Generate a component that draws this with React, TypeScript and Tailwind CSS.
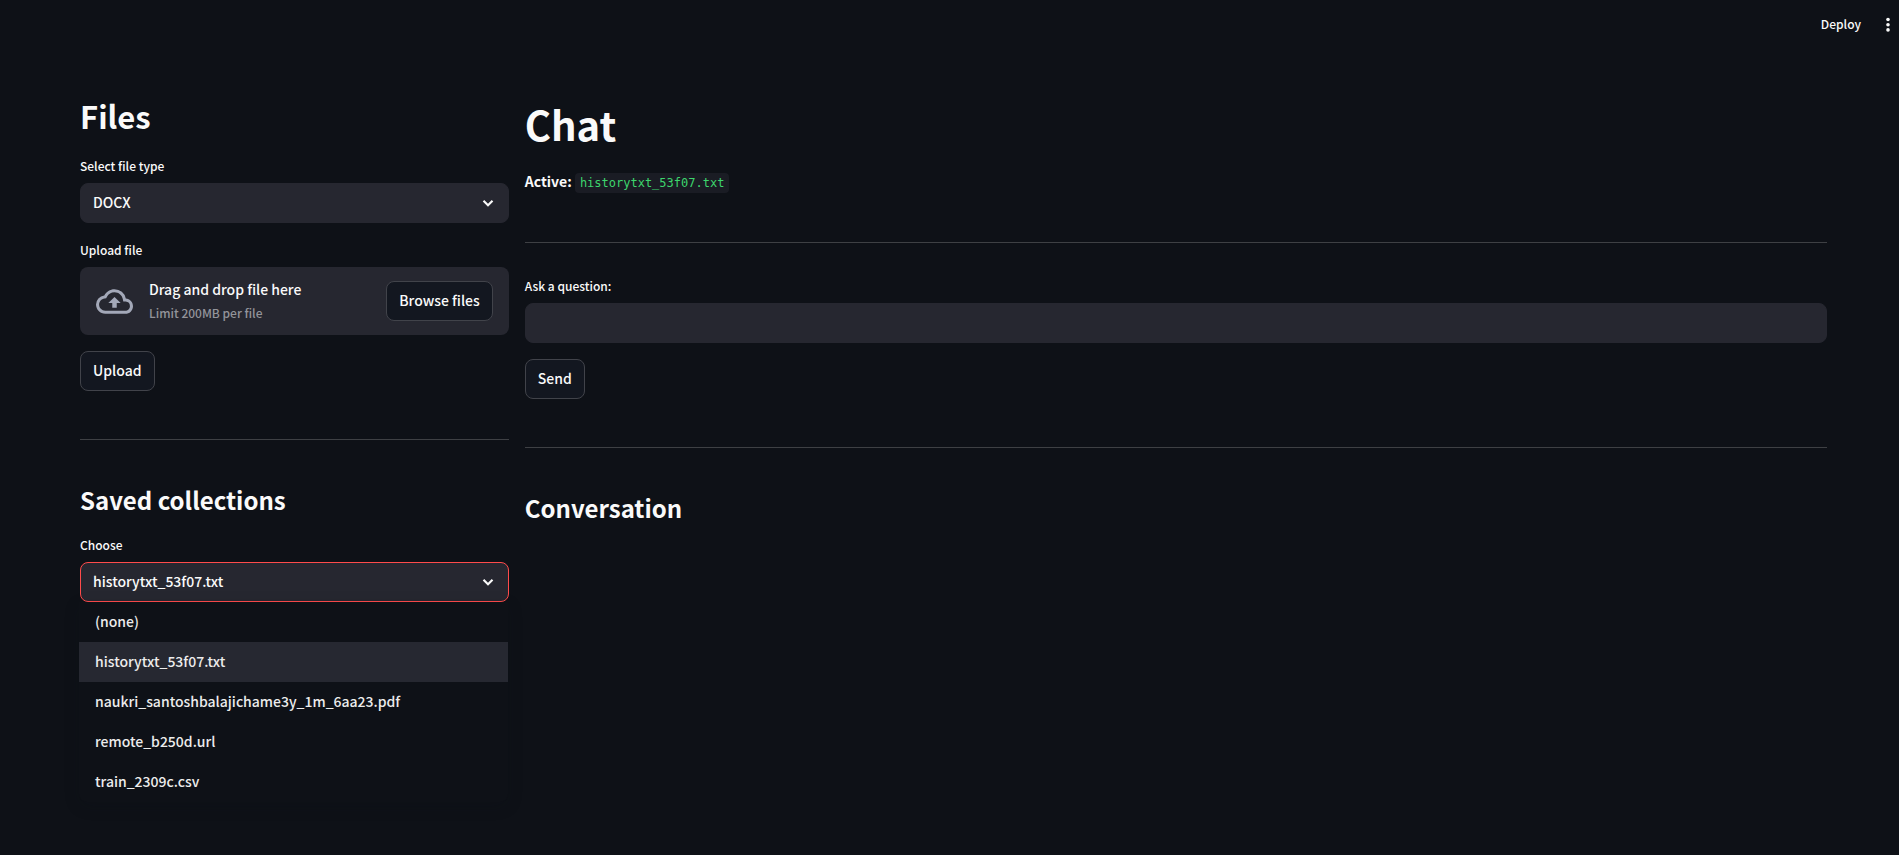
import { useRef, useState, type ReactNode, type SelectHTMLAttributes } from "react";
import { MdOutlineCloudUpload } from "react-icons/md";

const FILE_TYPES = ["DOCX", "PDF", "TXT", "CSV", "URL"];

const COLLECTIONS = [
  "(none)",
  "historytxt_53f07.txt",
  "naukri_santoshbalajichame3y_1m_6aa23.pdf",
  "remote_b250d.url",
  "train_2309c.csv",
];

function Chevron() {
  return (
    <svg
      viewBox="0 0 8 8"
      aria-hidden="true"
      className="pointer-events-none absolute top-3.5 right-[15px] size-3 fill-current"
    >
      <path d="M1.5 2L.5 3 4 6.5 7.5 3l-1-1L4 4.5 1.5 2z" />
    </svg>
  );
}

function Label({ htmlFor, children }: { htmlFor: string; children: ReactNode }) {
  return (
    <label htmlFor={htmlFor} className="block pb-1.5 text-xs leading-[22px] font-medium">
      {children}
    </label>
  );
}

type SelectBoxProps = SelectHTMLAttributes<HTMLSelectElement> & { options: string[]; open?: boolean };

function SelectBox({ options, open = false, ...rest }: SelectBoxProps) {
  return (
    <div className="relative">
      <select
        {...rest}
        className={
          "block h-10 w-full appearance-none rounded-lg border bg-[#262730] pr-10 pb-0.5 pl-3 text-sm font-medium outline-none " +
          (open ? "border-[#ff4b4b]" : "border-[#262730] focus:border-[#ff4b4b]")
        }
      >
        {options.map((option) => (
          <option key={option}>{option}</option>
        ))}
      </select>
      <Chevron />
    </div>
  );
}

function Button({ children, onClick }: { children: ReactNode; onClick?: () => void }) {
  return (
    <button
      type="button"
      onClick={onClick}
      className="h-10 shrink-0 rounded-lg border border-[#41434a] bg-[#131720] px-3 pb-0.5 text-sm font-medium hover:border-[#ff4b4b] hover:text-[#ff4b4b]"
    >
      {children}
    </button>
  );
}

function Divider() {
  return <hr className="my-8 border-t border-[#3e4044]" />;
}

function Subheading({ children }: { children: ReactNode }) {
  return <h3 className="-mt-1 pb-0.5 text-2xl leading-8 font-bold">{children}</h3>;
}

function FilesPanel() {
  const fileInput = useRef<HTMLInputElement>(null);
  const [fileType, setFileType] = useState("DOCX");
  const [collection, setCollection] = useState("historytxt_53f07.txt");

  return (
    <section className="flex min-w-0 grow basis-[calc(25%-16px)] flex-col gap-4">
      <h2 className="pb-[3px] text-[31px] leading-10 font-bold">Files</h2>

      <div>
        <Label htmlFor="file-type">Select file type</Label>
        <SelectBox
          id="file-type"
          options={FILE_TYPES}
          value={fileType}
          onChange={(event) => setFileType(event.target.value)}
        />
      </div>

      <div>
        <Label htmlFor="upload-file">Upload file</Label>
        <div className="flex items-center gap-4 rounded-lg bg-[#262730] px-4 py-3">
          <MdOutlineCloudUpload className="size-[37px] shrink-0 text-[#a3a8b8]" aria-hidden="true" />
          <div className="min-w-0 grow">
            <div className="pb-1 text-sm leading-5 font-medium">Drag and drop file here</div>
            <div className="text-xs leading-5 font-medium text-[#93949a]">Limit 200MB per file</div>
          </div>
          <input ref={fileInput} id="upload-file" type="file" className="hidden" />
          <Button onClick={() => fileInput.current?.click()}>Browse files</Button>
        </div>
      </div>

      <div>
        <Button>Upload</Button>
      </div>

      <Divider />

      <Subheading>Saved collections</Subheading>

      <div className="relative">
        <Label htmlFor="collection">Choose</Label>
        <SelectBox
          id="collection"
          open
          options={COLLECTIONS}
          value={collection}
          onChange={(event) => setCollection(event.target.value)}
        />
        <ul
          role="listbox"
          aria-label="Choose"
          className="absolute top-full right-px -left-px rounded-b-lg bg-[#0e1117] text-sm font-medium text-[#ececec] shadow-[0_4px_16px_rgba(14,17,23,0.16)]"
        >
          {COLLECTIONS.map((name) => (
            <li
              key={name}
              role="option"
              aria-selected={name === collection}
              onClick={() => setCollection(name)}
              className={
                "flex h-10 cursor-pointer items-center px-4 pb-0.5 " +
                (name === collection ? "bg-[#262831]" : "hover:bg-[#1a1c24]")
              }
            >
              {name}
            </li>
          ))}
        </ul>
      </div>
    </section>
  );
}

function ChatPanel() {
  return (
    <section className="flex min-w-0 grow basis-[calc(75%-16px)] flex-col gap-4">
      <h1 className="pb-0.5 text-[40px] leading-14 font-bold">Chat</h1>

      <p className="pb-0.5 text-sm leading-[22px]">
        <strong className="font-bold">Active:</strong>{" "}
        <code className="rounded bg-[#1a1c24] px-[5px] py-[3px] font-['DejaVu_Sans_Mono',monospace] text-xs text-[#3dd56d]">
          historytxt_53f07.txt
        </code>
      </p>

      <Divider />

      <div className="-mt-4">
        <Label htmlFor="question">Ask a question:</Label>
        <input
          id="question"
          type="text"
          className="block h-10 w-full rounded-lg border border-[#262730] bg-[#262730] px-3 text-sm outline-none focus:border-[#ff4b4b]"
        />
      </div>

      <div>
        <Button>Send</Button>
      </div>

      <Divider />

      <Subheading>Conversation</Subheading>
    </section>
  );
}

export default function App() {
  return (
    <div className="min-h-screen bg-[#0e1117] font-['Noto_Sans_CJK_SC',sans-serif] text-[#fafafa]">
      <header className="flex h-12 items-center justify-end gap-2">
        <button type="button" className="px-2 text-xs font-medium">
          Deploy
        </button>
        <button type="button" aria-label="Main menu" className="p-[3px]">
          <svg viewBox="0 0 16 16" className="size-4 fill-current" aria-hidden="true">
            <circle cx="8" cy="3.5" r="1.8" />
            <circle cx="8" cy="8.7" r="1.8" />
            <circle cx="8" cy="13.9" r="1.8" />
          </svg>
        </button>
      </header>
      <main className="flex gap-4 pt-12 pr-18 pl-20">
        <FilesPanel />
        <ChatPanel />
      </main>
    </div>
  );
}
